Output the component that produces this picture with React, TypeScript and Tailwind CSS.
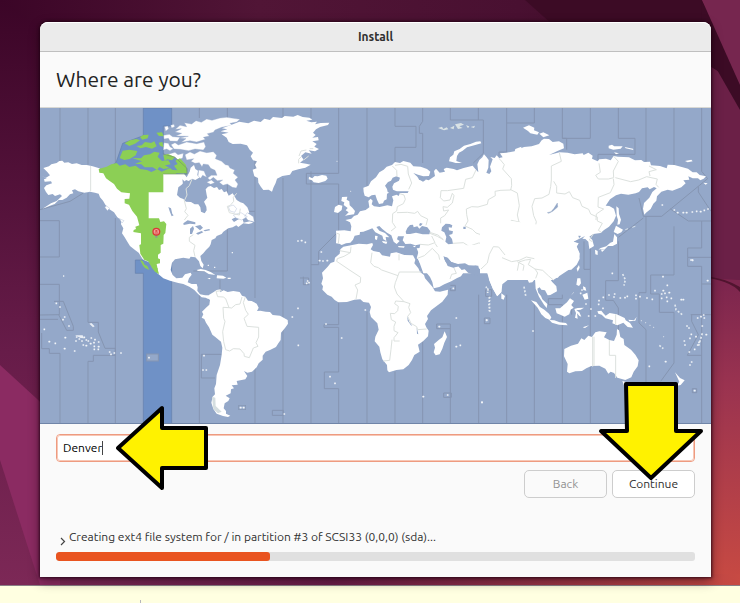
import { useState } from "react";

const SEA = "#94a8c9";
const ZONE = "#6f91c6";
const GREEN = "#8ccf55";
const LINE = "#8595b1";
const BORDER = "#dce1de";

type Dot = [number, number];

// A scatter of very small islands.
function Islets({ points, size = 5 }: { points: Dot[]; size?: number }) {
  return (
    <g fill="#f2f5f8">
      {points.map(([x, y]) => (
        <rect key={`${x}-${y}`} x={x - size / 2} y={y - size / 2} width={size} height={size} rx="1" />
      ))}
    </g>
  );
}

function ZoneLines() {
  return (
    <g fill="none" stroke={LINE} strokeWidth="3">
      <path d="M60 0V180M0 338H58V447H0M0 529H58V620L0 621M0 634H54M5 675V722H28V736H60V948" />
      <path d="M144 0V170M144 255V643H175V672L195 721H226V742H160V760H144V948M42 580H70L100 655V667H80L56 620" />
      <path d="M226 0V165M226 330V948M478 0V30M562 0V30M478 560V948M562 230V489H460M645 100V310H620M645 310V570M645 750V948M540 515V550" />
      <path d="M729 0V30M729 210V948M484 739H545M484 739V810H525M697 907H730V922H697Z M813 0V30M813 190V948" />
      <path d="M0 305L90 280L130 255" />
      <path d="M896 0V196H799V228H896V370L836 430V470H813M780 510H806V530H790V506" />
      <path d="M981 0V240M896 582V650H852V658H896V792H853V842H896V948M981 610V948" />
      <path d="M1065 0V55H1128V118H1065V165M1148 0V40L1138 55V76H1148V165M1065 790V948M1148 690V948" />
      <path d="M1231 0V36H1330V136L1300 165M1315 0V36M1400 45H1483V0M1400 0V132H1377V145M1231 540V548H1246V532H1231M1231 662H1190V648H1231V948M1211 855H1234V868H1211Z" />
      <path d="M1316 560V948M1400 560V948M1483 580V948M1567 0V91H1651V0M1567 91H1580V125M1337 545H1355V565H1337ZM1333 630H1350V647H1333Z" />
      <path d="M1735 0V91H1785V139H1674V155M1567 560V572H1525V590H1567V948M1651 415V484H1632V400M1651 484V948M1735 400V518H1697V577H1720L1735 600V700" />
      <path d="M1818 0V170M1818 325V554H1797V645L1818 665V948M1797 270L1810 325H1865L2003 212L1985 190V0M1902 0V175M1902 355V501H1832V558H1858V613H1902V765L1862 820" />
      <path d="M1890 302L1945 339H2013M1975 235V252L2013 310M1735 388L1810 330M2013 448H1943V420H1985V339M1943 448V475H1985V948M1985 528H2013M1952 620H2013M1955 620V640L1975 680L1942 742H1985" />
      <path d="M1957 842H1970V854H1957ZM1595 580V620" />
    </g>
  );
}

function WorldMap() {
  return (
    <svg viewBox="0 0 2013 948" className="block w-full" role="img" aria-label="Time zone map">
      <rect width="2013" height="948" fill={SEA} />
      <ZoneLines />

      {/* selected time zone */}
      <g stroke="#6581ab" strokeWidth="2" fill={ZONE}>
        <path d="M310 0H395V54H370V138L405 148L440 182V198H178L228 164L248 106L310 83Z" />
        <path d="M286 456H310V420H395V948H310V496H286Z" />
      </g>
      <rect x="320" y="738" width="35" height="21" fill={SEA} stroke={LINE} strokeWidth="3" />

      {/* North America */}
      <g transform="translate(0 -24)">
        <path
          fill="#fff"
          d="M5 228L18 233L30 226L22 216L10 204L27 199L34 193L50 189L58 183L67 182L73 188L85 187L96 192L110 190L125 195L140 195L158 199L178 205L200 222H370L408 222L432 221L440 232L449 215L452 203L462 195L466 207L474 212L472 226L481 231L466 240L456 236L446 243L438 240L425 254L415 262L411 285L420 293L430 297L438 305L453 306L464 313L475 313L481 322L483 335L494 340L500 331L499 320L492 305L502 293L500 285L497 268L504 260L512 258L522 264L531 261L537 270L545 267L552 277L560 274L566 287L578 280L590 300L601 307L610 310L622 322L628 337L620 345L603 348L590 350L575 358L582 366L592 360L606 352L611 368L630 364L640 368L626 372L610 370L595 381L589 376L578 382L565 385L550 395L545 402L530 408L526 415L515 420L512 433L508 440L498 450L490 460L481 468L484 483L491 494L488 505L481 498L477 484L466 472L452 470L448 476L430 473L405 478L396 488L392 510L398 525L409 535L427 533L435 523L452 518L455 524L447 535L443 547L455 552L470 552L473 562L472 572L480 583L490 589L503 586L508 596L503 596L497 593L485 592L472 580L463 570L448 560L430 552L415 549L390 542L370 535L352 520L350 508L335 495L325 485L316 482L308 478L302 468L296 458L282 448L270 438L262 425L254 412L246 400L250 385L243 373L244 361L232 352L222 337L207 327L196 314L189 302L180 292L176 281L165 278L150 275L133 278L115 274L105 268L96 271L100 280L90 283L80 293L67 300L56 300L44 312L28 318L8 326L33 310L50 303L66 288L60 283L45 288L38 282L25 285L18 276L12 264L19 256L36 250L33 244L14 245L12 238L20 235Z"
        />
        <g fill="#fff" stroke={SEA} strokeWidth="1">
          <path d="M408 108L425 100L405 96L424 86L406 88L420 76L440 80L433 68L455 72L468 62L484 67L500 57L516 61L540 54L560 52L600 58L590 66L570 70L576 76L545 82L525 90L520 97L502 101L508 108L490 112L496 118L470 126L450 122L424 127L438 116L418 114L445 109Z" />
          <path d="M393 134L405 128L415 135L440 126L470 131L492 126L497 140L490 150L465 147L446 152L420 148L402 147Z" />
          <path d="M371 106L388 103L398 110L420 112L412 124L390 123L385 115L372 117ZM372 128L385 130L390 140L400 146L390 152L380 147L370 150ZM374 80L383 78L386 86L377 94ZM392 76L402 73L404 80L395 84ZM371 165L390 161L405 157L414 164L430 160L428 174L413 180L404 171L384 172Z" />
          <path d="M435 164L450 156L463 162L480 153L500 158L520 155L530 166L526 176L545 184L556 194L565 196L570 204L584 210L580 220L594 232L585 240L594 252L589 264L577 262L562 252L549 256L538 247L548 240L532 242L520 232L510 240L503 234L514 226L531 226L525 211L512 205L505 194L490 192L486 200L478 188L465 190L453 184L461 176L440 180Z" />
          <path d="M476 210L492 213L500 232L488 226L482 235L474 228ZM500 247L514 240L524 248L512 253ZM565 320L580 315L590 326L584 337L570 333Z" />
          <path d="M580 345L603 338L622 350L605 360L588 354ZM622 338L640 350L643 366L624 361L614 348ZM238 356L252 362L246 369ZM200 318L209 325L202 332L194 321Z" />
        </g>
        <path
          fill={GREEN}
          d="M176 207L200 200L214 193L230 189L239 197L256 193L268 201L287 197L300 207L321 210L334 216L352 208L365 215L390 204L405 217L410 222H370V277H326V355H357L361 366L372 364L379 372L376 399L371 405L370 431L362 435V458L354 464V475L360 478V490L350 492L353 508L355 519L346 514L337 497L324 484L313 480L301 461L298 435L303 433V400L280 396L281 390L288 387L286 380L298 376L291 350L277 333L267 314L254 310V297L268 296L270 280L244 277L231 266L222 252L209 243L198 235L190 220L178 218Z"
        />
        <g fill={GREEN}>
          <path d="M248 152L268 149L292 153L287 166L269 177L253 180L239 174Z" />
          <path d="M276 174L303 175L312 166L330 163L343 155L359 158L353 170L366 183L385 181L392 193L375 196L388 204L371 207L358 201L351 210L338 202L314 202L304 193L285 191L306 184Z" />
          <path d="M406 182L420 175L438 195L441 220H386L389 209L412 211L402 197L413 192ZM370 166L384 162L405 171L396 181L382 178L374 183Z" />
          <path d="M289 138L305 136L315 126L333 129L343 124L350 139L336 146L318 141L301 145ZM254 130L270 121L289 117L300 121L285 131L268 138ZM300 111L310 105L326 104L323 115L307 119ZM349 98L366 97L371 109L357 108ZM356 128L367 126L370 141L360 137Z" />
          <path d="M300 480L308 483L314 494L322 498L328 510L315 504L309 497Z" />
          <path d="M325 484L340 492L352 505L357 523L345 515L336 504Z" />
        </g>
        <g fill={SEA}>
          <path d="M385 321L393 325L397 342L401 346L395 349L389 334ZM430 370L443 361L466 367L466 373L450 371L431 375ZM450 402V386L459 378L462 386L456 402ZM465 379L481 375L489 383L480 391L472 384ZM468 400L485 393L490 397L474 404ZM490 391L508 387L510 391L495 394Z" />
          <path d="M427 238L440 250L455 241L458 250L438 259L429 253ZM440 275H444V279H440Z" />
        </g>
        <g fill="none" stroke={BORDER} strokeWidth="3">
          <path d="M152 198V274M456 237L448 257L438 266L441 285L433 302L439 326L434 335L444 346L433 360M460 404L448 412V424L465 436L461 452L465 470M590 280L580 292L581 304L570 317L562 319L568 338L598 345L601 326" />
        </g>
        <path d="M370 222H441V205L405 172L370 162" fill="none" stroke="#74946a" strokeWidth="2" />
        <Islets points={[[577, 458], [71, 528], [505, 496], [524, 502]]} size={4} />
      </g>

      {/* South America, the Caribbean and the Pacific */}
      <g transform="translate(0 441)">
        <path
          fill="#fff"
          d="M480 118L503 122L520 112L530 105L542 103L540 112L551 106L563 111L580 108L599 111L606 122L616 125L624 137L635 138L650 146L656 158L651 168L661 167L677 170L690 171L698 180L720 182L743 195L744 206L735 219L723 233L722 255L715 265L708 276L690 285L677 290L668 302V314L656 325L650 337L636 350L622 353L612 348L622 363L616 373L590 378L593 389L575 391L582 400L573 403L572 415L557 422L569 430L565 438L554 445L551 460L558 468V476L571 482L564 486L549 483L530 476L520 462L514 443L518 425L525 418L523 400L528 387L530 360L540 330L545 300L547 278L543 260L525 245L517 239L507 217L498 203L493 192L485 188L490 178L486 170L498 158L508 149L510 135L500 126L485 124Z"
        />
        <path d="M470 45L482 42L497 45L512 51L526 60L506 57L493 49L474 48ZM531 61L549 62L559 68L550 71L530 70ZM502 69L512 69L509 73ZM563 68H572V72H563Z" fill="#fff" />
        <g fill="none" stroke={BORDER} strokeWidth="3">
          <path d="M545 107L528 109L533 125L550 126L557 131L567 158L575 159L587 149L600 147L606 126M567 158L549 157L551 190L555 199L548 230L551 260L557 284L569 288L580 281L600 282L612 296L613 304L628 308L640 279L654 274L648 263L656 246V217L621 214L616 200L612 190L625 178L617 166L610 143L616 126" />
        </g>
        <path d="M516 425L526 428L527 453L545 470L534 475L520 462Z" fill="#d5dee0" />
        <rect x="596" y="451" width="21" height="13" fill={SEA} stroke={LINE} strokeWidth="2" />
        <path d="M148 206L154 204L164 214L159 217ZM105 241H128L132 250L122 249Z" fill="#e9eef5" />
        <Islets
          points={[[49, 145], [60, 156], [74, 186], [69, 194], [87, 213], [13, 223], [28, 260], [46, 265], [74, 281], [104, 288], [76, 248], [108, 258], [110, 246], [118, 252], [126, 258], [133, 247], [139, 255], [145, 258], [154, 249], [165, 254], [152, 266], [162, 263], [176, 261], [130, 270], [139, 272], [163, 274], [176, 275], [163, 283], [175, 283], [209, 291], [213, 298], [223, 294], [243, 294], [327, 308], [492, 302], [489, 345], [499, 345], [602, 458], [611, 458], [733, 477], [757, 186], [774, 160], [775, 271]]}
        />
      </g>

      {/* Greenland and Iceland */}
      <g transform="translate(570 -24)">
        <path
          fill="#fff"
          d="M-25 103L-4 98L-28 94L-8 88L-24 85L5 74L28 65L55 70L72 62L92 66L103 56L120 60L129 51L156 54L164 48L190 50L203 45L218 51L238 53L247 59L229 62L244 67L261 65L255 73L272 69L298 68L294 75L270 81L258 88L249 98L257 105L247 113L264 111L266 121L247 124L260 132L253 140L267 147L255 154L236 151L245 161L226 157L213 168L221 179L210 188L228 191L242 194L226 203L205 208L187 213L180 224L157 228L141 236L137 249L131 261L126 275L116 269L100 270L93 261L85 248L84 234L73 229L68 209L80 205L75 194L81 184L69 181L62 169L69 158L59 149L51 136L32 131L8 132L-4 126L-10 113Z"
        />
        <path d="M237 230L247 235L254 228L263 229L276 225L289 227L293 236L286 243L266 249L251 247L246 241L236 238Z" fill="#fff" />
        <path d="M229 150L213 153L207 168M236 168L221 180M239 146L250 146M206 190V178L214 170" fill="none" stroke={BORDER} strokeWidth="3" />
        <Islets points={[[321, 184], [362, 274]]} size={3} />
      </g>

      {/* Europe and western Asia */}
      <g transform="translate(840 -24)">
        <path
          fill="#fff"
          d="M130 263L146 257L153 244L168 232L178 217L191 209L200 200L216 195L225 186L240 189L250 183L271 188L280 199L302 200L321 207L331 215L327 228L310 229L294 224L280 219L292 230L298 240L312 237L326 241L345 228L342 213L348 206L359 218L375 215L371 207L380 203L401 207L411 211L431 204L458 197L466 207L475 217L472 193L478 180L487 172L492 163L500 172L506 180L505 203L499 218L508 222L514 214L510 200L518 178L511 171L524 174L530 166L538 175L548 172L540 160L560 158L584 154L586 147L604 140V520H310L295 478L290 475L298 446L301 433L286 436L272 431L256 432L248 421L252 409H234L231 418L239 423L230 432L221 425L214 406L201 398L187 387L178 378L169 381L178 392L195 399L208 412L197 411L199 423L190 418L187 407L166 397L157 385L146 389L130 395L120 396L119 404L104 407L99 419L91 428L78 430L65 435L58 431L48 430L49 408L48 392L73 391L92 394L94 379L90 367L76 360L94 356L102 348L113 344L120 334L137 330L148 322L145 303L152 296L158 302L155 313L162 319L179 321L202 316L216 319L220 301L216 289L230 284L236 288L240 279L226 274L217 274L201 281L200 298L192 302L189 310L177 312L171 299L166 284L155 286L146 292L134 287L131 276Z"
        />
        <g fill={SEA}>
          <path d="M195 257L204 246L213 242L218 233L229 229L240 233L237 242L222 250L217 260L219 269L230 274H266L263 279L225 279L215 283L203 276L201 267Z" />
          <path d="M257 395L262 384L270 375L279 374L281 382L292 379L298 386L306 378L322 382L331 394L328 403L308 403L288 398L270 402L259 402ZM297 376L300 369L308 371L302 378Z" />
          <path d="M366 382L377 371L389 372L397 376L395 383L386 382L387 391L399 394L397 402L387 405L396 417L399 431L385 433L376 425L379 411L373 397L364 392ZM430 380H437V387H430Z" />
          <path d="M372 470L383 474L392 485L411 493L433 490L446 501L473 495L504 500L480 506V530L444 518L428 501L403 506L386 502L374 489ZM296 238L310 231L318 239L309 245ZM282 474L296 481L290 486Z" />
        </g>
        <path d="M66 291L82 290L80 299L88 304L89 316L97 323L105 333L102 343L83 346L75 348L86 337L77 331L83 324L71 315L73 307L64 303ZM45 321L56 314L67 317L65 330L54 339L42 336ZM186 423L202 425L199 432L189 428ZM165 407L173 408L171 420L165 418ZM234 438L254 439L252 443L236 442ZM278 438L288 437L284 442Z" fill="#fff" />
        <path d="M387 184L390 172L400 164L403 154L419 147L432 137L451 132L468 125L481 124L484 130L463 136L441 142L428 152L417 158L411 168L409 183L426 189H407L397 186Z" fill="#fff" />
        <path d="M354 84L366 80L370 87L380 82L385 88L372 91ZM390 84L403 77L401 88ZM405 73L423 69L432 74L418 79L428 84L414 87ZM438 76L448 79L444 85ZM452 81L465 77L462 84Z" fill="#d9e2e5" />
        <g fill="none" stroke={BORDER} strokeWidth="3">
          <path d="M217 198L230 211L231 230M225 196L243 193L263 199L265 222L275 249L266 268M239 281L252 285L256 298L250 311L232 320L230 333L218 341L217 367L227 382L213 393M231 338L262 337L284 340L293 334L302 347L323 357L318 376M468 210L457 233L437 238L431 265L382 272L363 272L361 293L371 303L390 300L397 280L402 287L397 309L382 322L369 320L371 333L386 330L374 347L362 354V370" />
          <path d="M538 176L554 194L558 216L572 231L576 249L569 266L525 274L526 287L505 299L502 313L474 321L455 320L439 327L440 344L444 363L435 378L457 388L468 399L491 407L501 412L512 403L532 393L552 393V376L562 373L574 350L600 330M329 397L354 405L370 419L352 409L330 400M300 433L325 435L345 428L335 408M345 430L356 447L362 468M399 430L430 428L450 441L437 457L446 483L440 500M450 438L476 429L497 431L517 425L524 434L514 447L514 463L493 476L482 490M480 405L498 401L511 411L490 416ZM514 411L512 425M532 440L550 461L560 478L600 482M50 400L58 402L55 431" />
        </g>
      </g>

      {/* Africa and Arabia */}
      <g transform="translate(780 366)">
        <path
          fill="#fff"
          d="M130 50L153 46L176 41L201 43L217 39L219 45L212 58L220 63L239 67L246 76L270 80L272 70L289 67L313 75L339 76L346 89L343 100L355 115L360 126L372 135L375 145L397 170L405 184L420 185L444 179L443 194L427 215L406 231L393 241L381 258L384 267L375 282L379 292L386 302L384 319L369 334L354 344L359 365L343 375L336 390L326 405L310 418L289 420L267 427L262 421L261 405L247 388L241 367L238 350L224 334L226 320L236 299L232 280L213 261L209 246L213 231L207 218L190 216L181 208L163 209L141 216L115 217L104 210L95 200L82 194L67 179L69 169L64 161L69 145L66 128L83 110L92 99L103 95L105 83L119 71L121 58Z"
        />
        <path
          fill="#fff"
          d="M350 55L358 75L352 84L360 99L370 108L375 122L390 141L397 156L401 175L418 171L433 163L454 154L470 145L483 139L493 124L484 119L476 109L461 112L448 106L437 96L428 80H445L456 95L485 102L500 108L528 106L539 117L556 116L549 124L562 130L568 151L578 175L591 198L604 185V40Z"
        />
        <path fill={SEA} d="M430 79L443 83L454 96L474 102L495 100L506 106L535 107L537 119L505 115L485 120L475 109L460 113L443 108Z" />
        <path d="M434 304L441 321L433 338L427 356L419 373L407 376L401 367L405 353L402 342L417 329L427 322Z" fill="#fff" />
        <path d="M322 258L328 276L337 287L333 286L323 272ZM350 292L355 313L351 311Z" fill={SEA} />
        <g fill="none" stroke={BORDER} strokeWidth="3">
          <path d="M119 62L151 68L153 50M151 68L132 79L112 86L110 94L153 123L182 142L181 158L165 165L173 180L168 207M216 68L212 98L222 109L235 113L245 120L294 137L298 126H364M294 137L286 158L283 171L291 192L312 215L287 213L284 221L295 229L293 242L284 251L271 250L274 269L287 276L282 289V302L294 308L282 323V333H299M312 215L330 221L326 232L332 248L323 259L333 280L350 290L353 299L380 297M276 329L273 358L269 391L250 393M352 85L373 77L397 55L416 75L419 89M450 147L455 133L469 130L462 114M297 73V91" />
        </g>
        <Islets
          points={[[5, 32], [16, 37], [-6, 33], [64, 66], [59, 92], [69, 93], [82, 92], [23, 153], [27, 158], [20, 160], [196, 240], [78, 282], [125, 324], [90, 440], [105, 460], [370, 500], [443, 495], [418, 290], [469, 264], [469, 350], [481, 346], [546, 517], [560, 270], [460, 175]]}
        />
        <path d="M563 175V190M568 202L567 224L570 245" stroke="#e8edf2" strokeWidth="5" strokeDasharray="4 6" fill="none" />
      </g>

      {/* Siberia, China and Japan */}
      <g transform="translate(1380 -24)">
        <path
          fill="#fff"
          d="M0 173L14 174L8 163L24 159L43 158L50 150L72 141L95 139L117 132L125 121L132 116L147 117L158 126L177 124L190 131L192 145L174 152L147 165L179 157L203 158L224 163L248 160L251 165L265 158L278 167L276 176L293 184L298 178L318 176L332 181L341 168L354 170L387 172L405 181L424 180L432 186L450 185L453 196L480 198L500 205L503 194L523 195L548 202L564 206L578 217L590 217L599 225L618 229L611 236L601 241L594 235L578 235L565 229L568 239L550 241L557 250L544 262L517 272L503 269L484 275L471 289L469 302L460 311L452 327L438 338L433 344L429 326L432 309L448 293L457 276L470 265L462 261L449 268L443 262L426 265L417 276L407 280L385 284L363 281L348 286L330 298L317 317L328 318L342 326L348 347L341 364L327 380L312 390L302 399L280 402L268 410L277 420L282 438L268 447L265 425L256 417L247 416L255 408L220 425L236 430L230 439L239 461L235 480L220 500L160 540H0Z"
        />
        <path d="M69 83L87 76L103 83L102 91L117 97L112 104L91 100L84 93ZM118 101L130 97L148 106L130 112ZM326 137L336 134L343 139L368 139L362 146L340 149L326 145ZM374 141L399 146L400 150L377 145ZM342 157L357 160L348 163ZM555 183L574 179L578 184L563 187ZM610 248L623 250L617 254Z" fill="#fff" />
        <path d="M349 319L356 325L357 342L363 359L359 373L352 374L354 360L350 347ZM348 377L369 389L364 397L353 402L341 396ZM343 402L351 412L351 431L338 438L324 438L313 449L297 447L287 454L302 444L319 439L331 428L339 425ZM285 449L293 453L293 465L286 463ZM303 449L313 450L306 456Z" fill="#fff" />
        <path d="M142 338L153 335L162 325L172 309L173 321L158 334L146 340ZM232 408L242 408L237 415Z" fill={SEA} stroke="#8398ba" />
        <g fill="none" stroke={BORDER} strokeWidth="3">
          <path d="M0 178L13 194L8 207L34 236L35 257L32 270L0 271M30 268L52 279L58 317L52 345L57 366L34 361L22 380L8 382L0 396M57 366L78 380L103 396L109 365L101 347L96 319L104 296L126 294L147 283L152 260L154 240V198L184 184L178 158M161 244L170 259L170 279L195 282L208 275L218 293L239 301L246 319L266 328L272 342L292 351L292 363L307 370L295 391L304 397M341 169L355 184L340 213L341 233L325 237L295 237L287 226L301 217L297 190M346 233L392 245L416 240L440 230L472 237L468 253L476 262M340 236L342 254L331 278L295 292L294 321L311 327L289 342L288 360M450 228L447 215L469 209L447 198M280 402L268 420L277 425" />
          <path d="M0 460L33 475L66 489L84 482L100 482L114 500M5 470L17 490L35 500L48 495L66 489" />
        </g>
        <path d="M397 382L406 379M376 389L384 386" stroke="#dbe4ec" strokeWidth="3" />
        <Islets points={[[523, 330], [533, 338], [550, 338], [560, 338], [577, 336], [590, 334], [602, 335], [613, 331], [624, 327], [577, 480], [487, 315]]} />
      </g>

      {/* South Asia, Indonesia and Oceania */}
      <g transform="translate(1320 366)">
        <path
          fill="#fff"
          d="M0 -40V112L18 123L23 115L28 151L39 177L52 199L64 187L67 163L84 149L103 137L112 122L128 123L135 132L147 158L157 157L165 147L167 176L177 200L192 224L200 234L202 222L187 208L183 198L175 188L172 176L179 172L184 179L195 181L203 196L211 195L231 184L229 169L216 155L207 142L214 132L227 134L239 127L263 120L274 119L290 104L299 86L298 68L289 51L295 41L280 35L290 28L297 24L290 0Z"
        />
        <path
          fill="#fff"
          d="M253 357L273 347L294 341L304 325L313 330L325 317L336 321L346 307L358 304L380 307L372 322L388 330L402 333L410 314L411 297L417 301L421 321L431 327L433 345L453 359L466 374L476 391L473 409L461 425L454 442L436 450L412 443L402 429L392 425L385 431L376 416L358 407L334 408L319 415L306 423L286 424L268 430L261 425L263 402L252 379Z"
        />
        <path d="M153 211L169 216L180 231L193 239L207 251L214 262L210 270L196 264L184 253L173 233ZM208 270L223 271L239 277L258 279L263 286L237 284L216 278ZM226 235L240 235L252 224L261 217L270 205L282 213L274 225L281 233L272 239L268 253L254 260L241 254L230 250ZM283 237L293 234L312 233L302 239L289 241L298 247L304 260L298 258L291 250L293 266L285 263L288 249Z" fill="#fff" />
        <path d="M352 244L364 242L370 250L377 257L389 249L410 253L434 264L437 271L450 279L459 293L443 291L430 278L412 286L397 280L399 271L376 265L365 254L355 251ZM445 269L462 271L470 261L466 272L448 274ZM292 145L301 145L303 160L297 168L289 164ZM309 169L316 172L319 182L310 180ZM307 194L322 188L325 206L314 209ZM281 188L275 194L271 199L282 185ZM64 190L75 198L71 209L64 206ZM290 116L297 105L299 113L293 125ZM225 134L238 136L234 143L227 143ZM268 288L284 286M308 292L327 286L315 294ZM585 427L594 437L600 444L614 451L602 465L591 467L598 455ZM427 453L438 456L434 472Z" fill="#fff" />
        <path d="M428 132L436 149L432 167M585 224L588 239L607 254M538 346L550 356M667 310L655 350M132 170L138 202" fill="none" stroke="#e2e9f0" strokeWidth="5" strokeDasharray="6 5" />
        <path d="M18 170L27 185M29 200L28 245" fill="none" stroke="#e8edf2" strokeWidth="5" strokeDasharray="4 6" />
        <g fill="none" stroke={BORDER} strokeWidth="3">
          <path d="M338 320V410M342 320V408M388 330V376H407V444M407 253V285M112 122L117 96L136 90L152 88L145 104L165 117L173 129L167 145M66 83L95 95L118 91L139 81L163 86M165 117L188 121L205 137L220 150M3 117L22 99L28 73L40 50L56 51L75 75M112 95L132 106L129 122" />
        </g>
        <Islets
          points={[[397, 130], [549, 140], [562, 166], [550, 182], [545, 192], [555, 190], [568, 188], [560, 202], [574, 205], [545, 205], [562, 214], [525, 182], [517, 208], [501, 204], [480, 200], [468, 196], [468, 206], [442, 199], [435, 203], [421, 204], [404, 192], [402, 201], [387, 195], [370, 202], [357, 212], [356, 223], [333, 237], [346, 258], [326, 258], [369, 235], [604, 209], [610, 209], [653, 264], [663, 260], [671, 255], [673, 264], [667, 288], [621, 288], [627, 294], [634, 313], [648, 320], [613, 333], [615, 345], [630, 325], [628, 366], [644, 358], [653, 345], [657, 337], [630, 405], [635, 396], [679, 314], [508, 409], [557, 395], [644, 482], [683, 152], [633, 90], [638, 91], [20, 271], [159, 303], [6, 517], [306, 180], [302, 190], [318, 222]]}
        />
        <Islets points={[[484, 272], [497, 278], [510, 286], [521, 292], [551, 320]]} size={3} />
      </g>

      {/* place marker */}
      <path d="M349 389V378" stroke="#8b9690" strokeWidth="6" />
      <circle cx="349" cy="371" r="12" fill="#d93a35" />
      <circle cx="349" cy="371" r="8" fill="#f2a19c" />
      <path d="M344 375H354M345 369H353M349 366V371" stroke="#d93a35" strokeWidth="2.5" />
      <path d="M0 946.5H2013" stroke="#7085a8" strokeWidth="3" />
    </svg>
  );
}

function Wallpaper() {
  return (
    <svg className="absolute inset-0 h-full w-full" viewBox="0 0 740 585" preserveAspectRatio="none" aria-hidden="true">
      <defs>
        <linearGradient id="sky" x1="0" y1="0" x2="1" y2="0">
          <stop offset="0" stopColor="#3b0527" />
          <stop offset=".35" stopColor="#511536" />
          <stop offset=".7" stopColor="#491031" />
          <stop offset="1" stopColor="#3a0c22" />
        </linearGradient>
        <linearGradient id="left" x1="0" y1="0" x2="0" y2="1">
          <stop offset="0" stopColor="#3b0527" />
          <stop offset=".6" stopColor="#671c49" />
          <stop offset="1" stopColor="#7c2856" />
        </linearGradient>
        <linearGradient id="right" x1="0" y1="0" x2="0" y2="1">
          <stop offset="0" stopColor="#7c2752" />
          <stop offset=".4" stopColor="#7d264e" />
          <stop offset=".6" stopColor="#9a3350" />
          <stop offset="1" stopColor="#c84a42" />
        </linearGradient>
        <linearGradient id="base" x1="0" y1="0" x2="1" y2="0">
          <stop offset="0" stopColor="#7b2857" />
          <stop offset=".4" stopColor="#6b1c4a" />
          <stop offset="1" stopColor="#c74a43" />
        </linearGradient>
      </defs>
      <rect width="740" height="585" fill="url(#sky)" />
      <path d="M0 0L90 60V585H0Z" fill="url(#left)" />
      <path d="M0 365L60 420V585H40L0 460Z" fill="#8b2b62" />
      <path d="M525 0H702L740 85V280L700 270V25H553Z" fill="#3c0b25" />
      <path d="M702 0H740V85Z" fill="#76264f" />
      <path d="M700 90L740 85V585H700Z" fill="url(#right)" />
      <path d="M700 60L740 85V280L700 278Z" fill="#6b2047" />
      <path d="M702 0L740 70V110L700 40Z" fill="#3c0b25" />
      <path d="M702 0H740V85Z" fill="#76264f" />
      <path d="M700 277Q730 280 740 292V287Q725 278 700 275Z" fill="#51142f" />
      <path d="M60 574H740V585H70Z" fill="url(#base)" />
    </svg>
  );
}

export default function App() {
  const [place, setPlace] = useState("Denver");

  return (
    <div className="min-h-screen bg-[#ffffe1] font-['Ubuntu','Noto_Sans',sans-serif] text-[#303030]">
      <div className="relative border-b border-[#8a7f86] pt-[22px] pr-[29px] pb-2 pl-10">
        <Wallpaper />
        <main className="relative rounded-t-lg bg-[#fafafa] shadow-[0_0_3px_1px_rgba(30,0,18,0.75),0_4px_12px_rgba(20,0,12,0.45)]">
          <header className="flex h-[30px] items-center justify-center rounded-t-lg border-t border-b border-t-white border-b-[#bfbfbf] bg-[#ebebeb] text-xs font-semibold">
            Install
          </header>
          <h1 className="flex h-14 items-center border-b border-[#d8d8d4] px-4 text-[21px] text-[#222]">Where are you?</h1>
          <WorldMap />

          <section className="relative px-4 pt-[10px] pb-4">
            <input
              aria-label="Location"
              value={place}
              onChange={(e) => setPlace(e.target.value)}
              className="block h-7 w-full rounded border border-[#ee9b80] bg-white px-[6px] pb-[2px] text-xs text-black outline outline-[#f7c7b6] -outline-offset-2"
            />
            <span className="absolute top-[17px] left-[62px] h-[14px] w-px bg-[#444]" />
            <div className="mt-2 flex justify-end gap-[5px] text-xs">
              <button disabled className="h-7 w-[83px] rounded-[5px] border border-[#cdcdcd] bg-[#fafafa] text-[#929292]">
                Back
              </button>
              <button className="h-7 w-[83px] rounded-[5px] border border-[#cdcdcd] bg-white">Continue</button>
            </div>
            <div className="mt-[29px] flex h-5 items-center gap-[3px] text-xs">
              <button aria-label="Show details" className="flex w-[10px] justify-end pt-2">
                <svg width="6" height="9" viewBox="0 0 6 9" fill="none" stroke="#444" strokeWidth="1.2">
                  <path d="M1 1L4.5 4.5L1 8" />
                </svg>
              </button>
              <label htmlFor="install-progress">Creating ext4 file system for / in partition #3 of SCSI33 (0,0,0) (sda)...</label>
            </div>
            <progress
              id="install-progress"
              value={33.5}
              max={100}
              className="mt-[5px] block h-[9px] w-full appearance-none overflow-hidden rounded-[3px] [&::-webkit-progress-bar]:bg-[#e0e0e0] [&::-webkit-progress-value]:rounded-[3px] [&::-webkit-progress-value]:bg-[#e95420]"
            />

            <svg className="absolute -top-5 left-[74px]" width="96" height="88" viewBox="114 404 96 88" aria-hidden="true">
              <path d="M118 448L162 408V428H206V468H162V488Z" fill="#fff200" stroke="#000" strokeWidth="4" strokeLinejoin="round" />
            </svg>
            <svg className="absolute -top-11 right-[6px]" width="109" height="103" viewBox="596 380 109 103" aria-hidden="true">
              <path d="M626 384H676V431H701L651 478L601 431H627Z" fill="#fff200" stroke="#000" strokeWidth="4" strokeLinejoin="round" />
            </svg>
          </section>
        </main>
      </div>
      <div className="ml-[140px] pt-[14px]">
        <div className="h-1 w-px bg-[#b5b5bd]" />
      </div>
    </div>
  );
}
